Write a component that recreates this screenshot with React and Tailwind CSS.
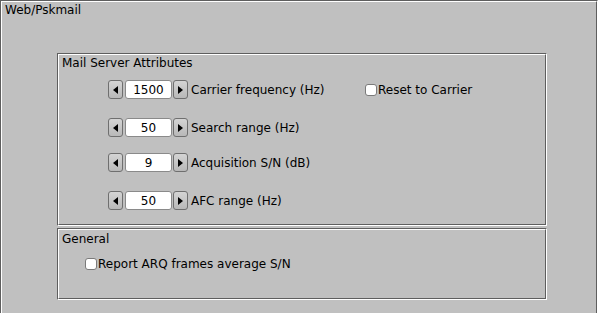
import React from 'react';

const font = { fontFamily: '"DejaVu Sans", Verdana, sans-serif' };

function Engraved({ className = '', children }) {
  return (
    <div className={`border border-t-[#5e5e5e] border-l-[#5e5e5e] border-b-white border-r-white ${className}`}>
      <div className="h-full border border-t-white border-l-white border-b-[#5e5e5e] border-r-[#5e5e5e]">
        {children}
      </div>
    </div>
  );
}

function ArrowButton({ dir }) {
  return (
    <div className="w-[15px] h-[19px] rounded-[3px] border border-[#6f6f6f] bg-gradient-to-b from-[#d4d4d4] to-[#b8b8b8] flex items-center justify-center">
      {dir === 'left' ? (
        <div className="w-0 h-0 border-y-[4px] border-y-transparent border-r-[5px] border-r-black" />
      ) : (
        <div className="w-0 h-0 border-y-[4px] border-y-transparent border-l-[5px] border-l-black" />
      )}
    </div>
  );
}

function Spinner({ value, label, className = '', children }) {
  return (
    <div className={`flex items-center ${className}`}>
      <ArrowButton dir="left" />
      <div className="ml-[2px] w-[47px] h-[19px] rounded-[3px] border border-[#8a8a8a] bg-white flex items-center justify-center text-black">
        {value}
      </div>
      <div className="ml-[1px]">
        <ArrowButton dir="right" />
      </div>
      <span className="ml-[3px] w-[174px] text-black">{label}</span>
      {children}
    </div>
  );
}

function Check({ label }) {
  return (
    <div className="flex items-center">
      <div className="w-[12px] h-[12px] rounded-[3px] border border-[#7a7a7a] bg-white" />
      <span className="ml-[1px] text-black">{label}</span>
    </div>
  );
}

export default function App() {
  return (
    <div className="w-[598px] h-[313px] overflow-hidden bg-[#c0c0c0] text-[12px] leading-[14px]" style={font}>
      <Engraved className="w-[598px] h-[330px]">
        <div className="pl-[3px] pt-[1px] text-black">Web/Pskmail</div>
        <div className="ml-[55px] mt-[36px] w-[490px]">
          <Engraved className="h-[173px]">
            <div className="pl-[3px] pt-[1px] text-black">Mail Server Attributes</div>
            <div className="pl-[49px]">
              <Spinner value="1500" label="Carrier frequency (Hz)" className="mt-[10px]">
                <Check label="Reset to Carrier" />
              </Spinner>
              <Spinner value="50" label="Search range (Hz)" className="mt-[19px]" />
              <Spinner value="9" label="Acquisition S/N (dB)" className="mt-[16px]" />
              <Spinner value="50" label="AFC range (Hz)" className="mt-[19px]" />
            </div>
          </Engraved>
          <Engraved className="mt-[2px] h-[72px]">
            <div className="pl-[3px] pt-[2px] text-black">General</div>
            <div className="pl-[26px] mt-[11px]">
              <Check label="Report ARQ frames average S/N" />
            </div>
          </Engraved>
        </div>
      </Engraved>
    </div>
  );
}
